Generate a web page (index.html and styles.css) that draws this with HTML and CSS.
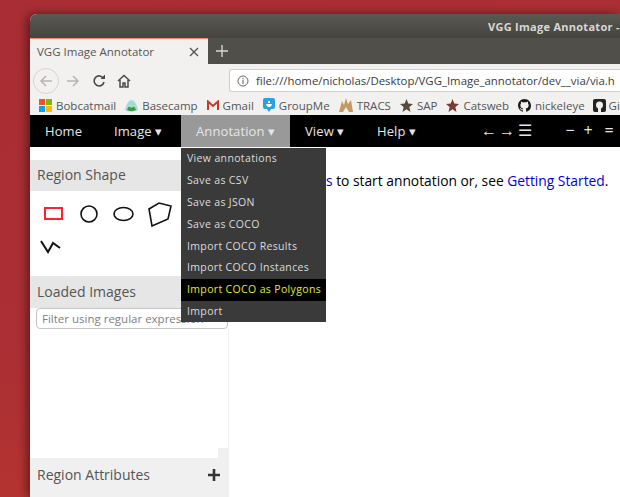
FILE: index.html
```html
<!DOCTYPE html>
<html lang="en">
<head>
    <meta charset="UTF-8">
    <meta name="viewport" content="width=device-width, initial-scale=1.0">
    <title>VGG Image Annotator</title>
    <link rel="stylesheet" href="styles.css">
</head>
<body>
    <div class="window">
        <!-- Title bar -->
        <div class="titlebar"><span class="title-text">VGG Image Annotator -</span></div>

        <!-- Tabs -->
        <div class="tabbar">
            <div class="tab">
                <span class="tab-label">VGG Image Annotator</span>
                <svg class="tab-close" width="10" height="10" viewBox="0 0 10 10"><path d="M1 1L9 9M9 1L1 9" stroke="#555" stroke-width="1.4"/></svg>
            </div>
            <svg class="tab-new" width="12" height="12" viewBox="0 0 12 12"><path d="M6 0V12M0 6H12" stroke="#d8d8d4" stroke-width="1.4"/></svg>
        </div>

        <!-- Toolbar -->
        <div class="toolbar">
            <div class="back-btn">
                <svg width="14" height="14" viewBox="0 0 14 14"><path d="M13 7H2M7 2L2 7L7 12" fill="none" stroke="#b5b5b5" stroke-width="1.5"/></svg>
            </div>
            <svg class="fwd-btn" width="14" height="14" viewBox="0 0 14 14"><path d="M1 7H12M7 2L12 7L7 12" fill="none" stroke="#b5b5b5" stroke-width="1.5"/></svg>
            <svg class="reload-btn" width="14" height="14" viewBox="0 0 14 14"><path d="M11.5 4.5A5 5 0 1 0 12 8" fill="none" stroke="#4a4a4a" stroke-width="1.6"/><path d="M8.5 5H13V0.5Z" fill="#4a4a4a"/></svg>
            <svg class="home-btn" width="14" height="14" viewBox="0 0 14 14"><path d="M1 7L7 1.5L13 7M3 6V13H6V9H8V13H11V6" fill="none" stroke="#4a4a4a" stroke-width="1.5"/></svg>
            <div class="urlbar">
                <svg width="12" height="12" viewBox="0 0 12 12"><circle cx="6" cy="6" r="5" fill="none" stroke="#666" stroke-width="1"/><path d="M6 5V9M6 3V4.2" stroke="#666" stroke-width="1.1"/></svg>
                <span class="url-text">file:///home/nicholas/Desktop/VGG_Image_annotator/dev__via/via.h</span>
            </div>
        </div>

        <!-- Bookmarks -->
        <div class="bookmarks">
            <span class="bookmark">
                <svg width="13" height="13" viewBox="0 0 13 13"><rect width="6" height="6" fill="#f25022"/><rect x="7" width="6" height="6" fill="#7fba00"/><rect y="7" width="6" height="6" fill="#00a4ef"/><rect x="7" y="7" width="6" height="6" fill="#ffb900"/></svg>
                Bobcatmail
            </span>
            <span class="bookmark">
                <svg width="13" height="13" viewBox="0 0 13 13"><path d="M0 11C1 5 4 1 6.500 1S12 5 13 11C10 13 3 13 0 11Z" fill="#a8dcd2"/><path d="M2 11C3 8 4 7 5 8L6.500 9L8 8C9 7 10 8 11 11C8 12.500 5 12.500 2 11Z" fill="#3c9a3c"/></svg>
                Basecamp
            </span>
            <span class="bookmark">
                <svg width="12" height="11" viewBox="0 0 12 11"><path d="M1 10V1.500L6 6L11 1.500V10" fill="none" stroke="#c9382c" stroke-width="2"/></svg>
                Gmail
            </span>
            <span class="bookmark">
                <svg width="12" height="14" viewBox="0 0 12 14"><path d="M2 0H10Q12 0 12 2V9Q12 11 10 11H8L6 14L4 11H2Q0 11 0 9V2Q0 0 2 0Z" fill="#2a9ee8"/><path d="M3 6H9Q8.500 9 6 9T3 6ZM5 3H7V5H5Z" fill="#fff"/></svg>
                GroupMe
            </span>
            <span class="bookmark">
                <svg width="14" height="14" viewBox="0 0 14 14"><path d="M0 14L3 3L5 7L7 0L9 6L12 2L14 14H10L7 9L4 14Z" fill="#c49a62"/></svg>
                TRACS
            </span>
            <span class="bookmark">
                <svg width="13" height="13" viewBox="0 0 13 13"><path d="M6.500 0L8.300 4.500L13 5L9.400 8L10.500 13L6.500 10.300L2.500 13L3.600 8L0 5L4.700 4.500Z" fill="#5a4a3c"/></svg>
                SAP
            </span>
            <span class="bookmark">
                <svg width="13" height="13" viewBox="0 0 13 13"><path d="M6.500 0L8.300 4.500L13 5L9.400 8L10.500 13L6.500 10.300L2.500 13L3.600 8L0 5L4.700 4.500Z" fill="#7c3b32"/></svg>
                Catsweb
            </span>
            <span class="bookmark">
                <svg width="13" height="13" viewBox="0 0 16 16"><path d="M8 0C3.580 0 0 3.580 0 8c0 3.540 2.290 6.530 5.470 7.590.4.070.55-.17.55-.38v-1.340c-2.230.48-2.690-1.070-2.690-1.070-.36-.92-.89-1.170-.89-1.170-.73-.5.050-.49.050-.49.800.060 1.230.83 1.230.83.710 1.220 1.870.87 2.330.66.070-.52.280-.87.510-1.070-1.780-.2-3.640-.89-3.640-3.950 0-.87.310-1.590.82-2.150-.08-.2-.36-1.020.08-2.120 0 0 .67-.21 2.200.82A7.700 7.700 0 0 1 8 3.870c.68 0 1.360.09 2 .27 1.530-1.040 2.200-.82 2.200-.82.44 1.100.16 1.920.08 2.120.51.560.82 1.270.82 2.150 0 3.070-1.870 3.750-3.650 3.950.290.250.54.730.54 1.480v2.190c0 .21.150.46.550.38A8 8 0 0 0 16 8c0-4.420-3.580-8-8-8Z" fill="#1b1b1b"/></svg>
                nickeleye
            </span>
            <span class="bookmark bookmark-last">
                <svg width="13" height="13" viewBox="0 0 13 13"><rect width="13" height="13" rx="2" fill="#222"/><circle cx="6.500" cy="6" r="3.500" fill="#eee"/><rect x="5" y="8" width="3" height="5" fill="#eee"/></svg>
                Gi
            </span>
        </div>

        <!-- Page -->
        <div class="page">
            <div class="navbar">
                <a class="nav-item nav-home">Home</a>
                <a class="nav-item nav-image">Image &#9662;</a>
                <a class="nav-item nav-annotation">Annotation &#9662;</a>
                <a class="nav-item nav-view">View &#9662;</a>
                <a class="nav-item nav-help">Help &#9662;</a>
                <div class="nav-tools">
                    <span>&larr;</span><span>&rarr;</span><span>&#9776;</span>
                    <span class="tool-gap">&minus;</span><span>+</span><span class="tool-last">=</span>
                </div>

                <!-- Annotation menu -->
                <div class="menu">
                    <div class="menu-item">View annotations</div>
                    <div class="menu-item">Save as CSV</div>
                    <div class="menu-item">Save as JSON</div>
                    <div class="menu-item">Save as COCO</div>
                    <div class="menu-item">Import COCO Results</div>
                    <div class="menu-item">Import COCO Instances</div>
                    <div class="menu-item menu-active">Import COCO as Polygons</div>
                    <div class="menu-item">Import</div>
                </div>
            </div>

            <div class="content">
                <div class="sidebar">
                    <div class="side-head side-shape">Region Shape</div>
                    <div class="shapes">
                        <svg width="20" height="14" viewBox="0 0 20 14"><rect x="1" y="1" width="17" height="11" fill="#fff" stroke="#ff2030" stroke-width="2"/></svg>
                        <svg width="20" height="20" viewBox="0 0 20 20"><circle cx="10" cy="10" r="8" fill="none" stroke="#111" stroke-width="1.6"/></svg>
                        <svg class="shape-ellipse" width="22" height="16" viewBox="0 0 22 16"><ellipse cx="10.500" cy="8" rx="9.500" ry="6.500" fill="none" stroke="#111" stroke-width="1.600"/></svg>
                        <svg class="shape-poly" width="24" height="26" viewBox="0 0 24 26"><path d="M1 8L11 2L23 5L20 18L4 25Z" fill="none" stroke="#111" stroke-width="1.600"/></svg>
                        <svg class="shape-line" width="22" height="16" viewBox="0 0 22 16"><path d="M1 2L8 13L13 4L20 9" fill="none" stroke="#111" stroke-width="2"/></svg>
                    </div>
                    <div class="side-head side-images">Loaded Images</div>
                    <input class="filter" type="text" placeholder="Filter using regular expression">
                    <div class="image-list"><div class="scroll-corner"></div></div>
                    <div class="side-head side-attrs">
                        Region Attributes
                        <svg width="14" height="14" viewBox="0 0 14 14"><path d="M7 1V13M1 7H13" stroke="#333" stroke-width="2.600"/></svg>
                    </div>
                </div>
                <div class="main">
                    <p class="start-text"><a class="link">s</a> to start annotation or, see <a class="link">Getting Started</a>.</p>
                </div>
            </div>
        </div>
    </div>
</body>
</html>
```

FILE: styles.css
```css
/* Desktop behind the browser window */
html, body {
    height: 100%;
}

body {
    margin: 0;
    padding: 14px 0 0 30px;
    box-sizing: border-box;
    overflow: hidden;
    background: linear-gradient(160deg, #a92d34 0%, #ab2f33 50%, #c0392b 100%);
    font-family: "Open Sans", "Noto Sans", sans-serif;
}

.window {
    width: 590px;
    height: 483px;
    display: flex;
    flex-direction: column;
    border-radius: 7px 0 0 0;
    overflow: hidden;
    background: #fff;
    box-shadow: -3px 0 10px rgba(0, 0, 0, 0.45);
}

/* Title bar */
.titlebar {
    height: 24px;
    flex: none;
    display: flex;
    align-items: center;
    padding-left: 458px;
    background: linear-gradient(to bottom, #5a5852, #45443e);
}

.title-text {
    font-size: 11px;
    font-weight: 700;
    letter-spacing: 0.28px;
    color: #d9d8d4;
    white-space: nowrap;
}

/* Tabs */
.tabbar {
    height: 26px;
    flex: none;
    display: flex;
    align-items: center;
    background: #504f49;
}

.tab {
    width: 178px;
    height: 26px;
    box-sizing: border-box;
    display: flex;
    align-items: center;
    justify-content: space-between;
    padding: 0 9px 0 7px;
    background: #f2f1f0;
    border-top: 1px solid #ef8a6a;
    font-size: 11.500px;
    color: #555;
}

.tab-new {
    margin-left: 8px;
}

/* Toolbar */
.toolbar {
    height: 33px;
    flex: none;
    display: flex;
    align-items: center;
    background: #f2f1f0;
}

.back-btn {
    width: 24px;
    height: 24px;
    margin-left: 3px;
    display: flex;
    align-items: center;
    justify-content: center;
    border: 1px solid #d4d4d2;
    border-radius: 50%;
}

.fwd-btn {
    margin-left: 7px;
}

.reload-btn {
    margin-left: 12px;
}

.home-btn {
    margin-left: 11px;
}

.urlbar {
    height: 21px;
    flex: 1;
    min-width: 0;
    margin-left: 98px;
    padding-left: 7px;
    display: flex;
    align-items: center;
    gap: 7px;
    background: #fff;
    border: 1px solid #cfcfcd;
    border-right: none;
    border-radius: 3px 0 0 3px;
    overflow: hidden;
}

.url-text {
    font-size: 11.400px;
    color: #3c3c3c;
    white-space: nowrap;
}

/* Bookmarks */
.bookmarks {
    height: 18px;
    box-sizing: border-box;
    flex: none;
    display: flex;
    align-items: center;
    gap: 9px;
    padding: 0 0 2px 9px;
    background: #f2f1f0;
    white-space: nowrap;
}

.bookmark {
    display: flex;
    align-items: center;
    gap: 4px;
    font-size: 11.500px;
    color: #555;
}

.bookmark-last {
    margin-left: -1px;
    gap: 3px;
}

/* Page */
.page {
    flex: 1;
    display: flex;
    flex-direction: column;
    min-height: 0;
}

.navbar {
    position: relative;
    height: 32px;
    flex: none;
    display: flex;
    align-items: stretch;
    background: #000;
    font-size: 13px;
    color: #e6e6e6;
}

.nav-item {
    display: flex;
    align-items: center;
    white-space: nowrap;
    letter-spacing: 0.1px;
}

.nav-home {
    width: 38px;
    margin-left: 15px;
}

.nav-image {
    width: 52px;
    margin-left: 31px;
}

.nav-annotation {
    width: 94px;
    margin-left: 15px;
    padding-left: 15px;
    background: #999;
}

.nav-view {
    width: 56px;
    margin-left: 15px;
}

.nav-help {
    width: 39px;
    margin-left: 16px;
}

.nav-tools {
    margin-left: 64px;
    padding-bottom: 2px;
    display: flex;
    align-items: center;
    font-size: 16px;
}

.nav-tools span {
    width: 18px;
    text-align: center;
}

.nav-tools .tool-gap {
    margin-left: 27px;
}

.nav-tools .tool-last {
    margin-left: 3px;
}

/* Annotation dropdown */
.menu {
    position: absolute;
    top: 33px;
    left: 151px;
    width: 145px;
    background: #3a3a3a;
    z-index: 5;
}

.menu-item {
    height: 21.800px;
    box-sizing: border-box;
    display: flex;
    align-items: center;
    padding: 0 0 1px 6px;
    font-size: 10.500px;
    letter-spacing: 0.35px;
    color: #dcdcdc;
    white-space: nowrap;
}

.menu-active {
    background: #000;
    color: #e3e83a;
}

/* Left panel */
.content {
    flex: 1;
    display: flex;
    min-height: 0;
}

.sidebar {
    width: 199px;
    flex: none;
    display: flex;
    flex-direction: column;
    padding-top: 13px;
    box-sizing: border-box;
}

.side-head {
    flex: none;
    box-sizing: border-box;
    display: flex;
    align-items: center;
    justify-content: space-between;
    padding: 0 8px 2px 7px;
    font-size: 14px;
    color: #555;
}

.side-shape {
    height: 31px;
    background: #e6e6e6;
}

.side-images {
    height: 32px;
    background: #e6e6e6;
}

.side-attrs {
    height: 39px;
    padding-bottom: 6px;
    background: #f0f0f0;
}

.shapes {
    height: 85px;
    flex: none;
    box-sizing: border-box;
    display: flex;
    flex-wrap: wrap;
    align-content: flex-start;
    align-items: center;
    gap: 12px 15px;
    padding: 10px 30px 0 14px;
}

.shape-ellipse {
    margin-left: -1px;
}

.shape-poly {
    margin-left: -2px;
}

.shape-line {
    margin-left: -4px;
}

.filter {
    flex: none;
    width: 192px;
    height: 21px;
    box-sizing: border-box;
    margin: 0 0 0 6px;
    padding: 0 5px;
    border: 1px solid #c4c4c4;
    border-radius: 4px;
    font-family: inherit;
    font-size: 11.500px;
}

.filter::placeholder {
    color: #808080;
}

.image-list {
    flex: 1;
    display: flex;
    justify-content: flex-end;
    align-items: flex-end;
    border-right: 1px solid #f0f0f0;
}

.scroll-corner {
    width: 10px;
    height: 10px;
    background: #f0f0f0;
}

/* Main area */
.main {
    flex: 1;
    padding-left: 97px;
    min-width: 0;
}

.start-text {
    margin: 24px 0 0;
    font-size: 13.800px;
    word-spacing: 0;
    color: #000;
    white-space: nowrap;
}

.link {
    color: #0000e0;
}
```
